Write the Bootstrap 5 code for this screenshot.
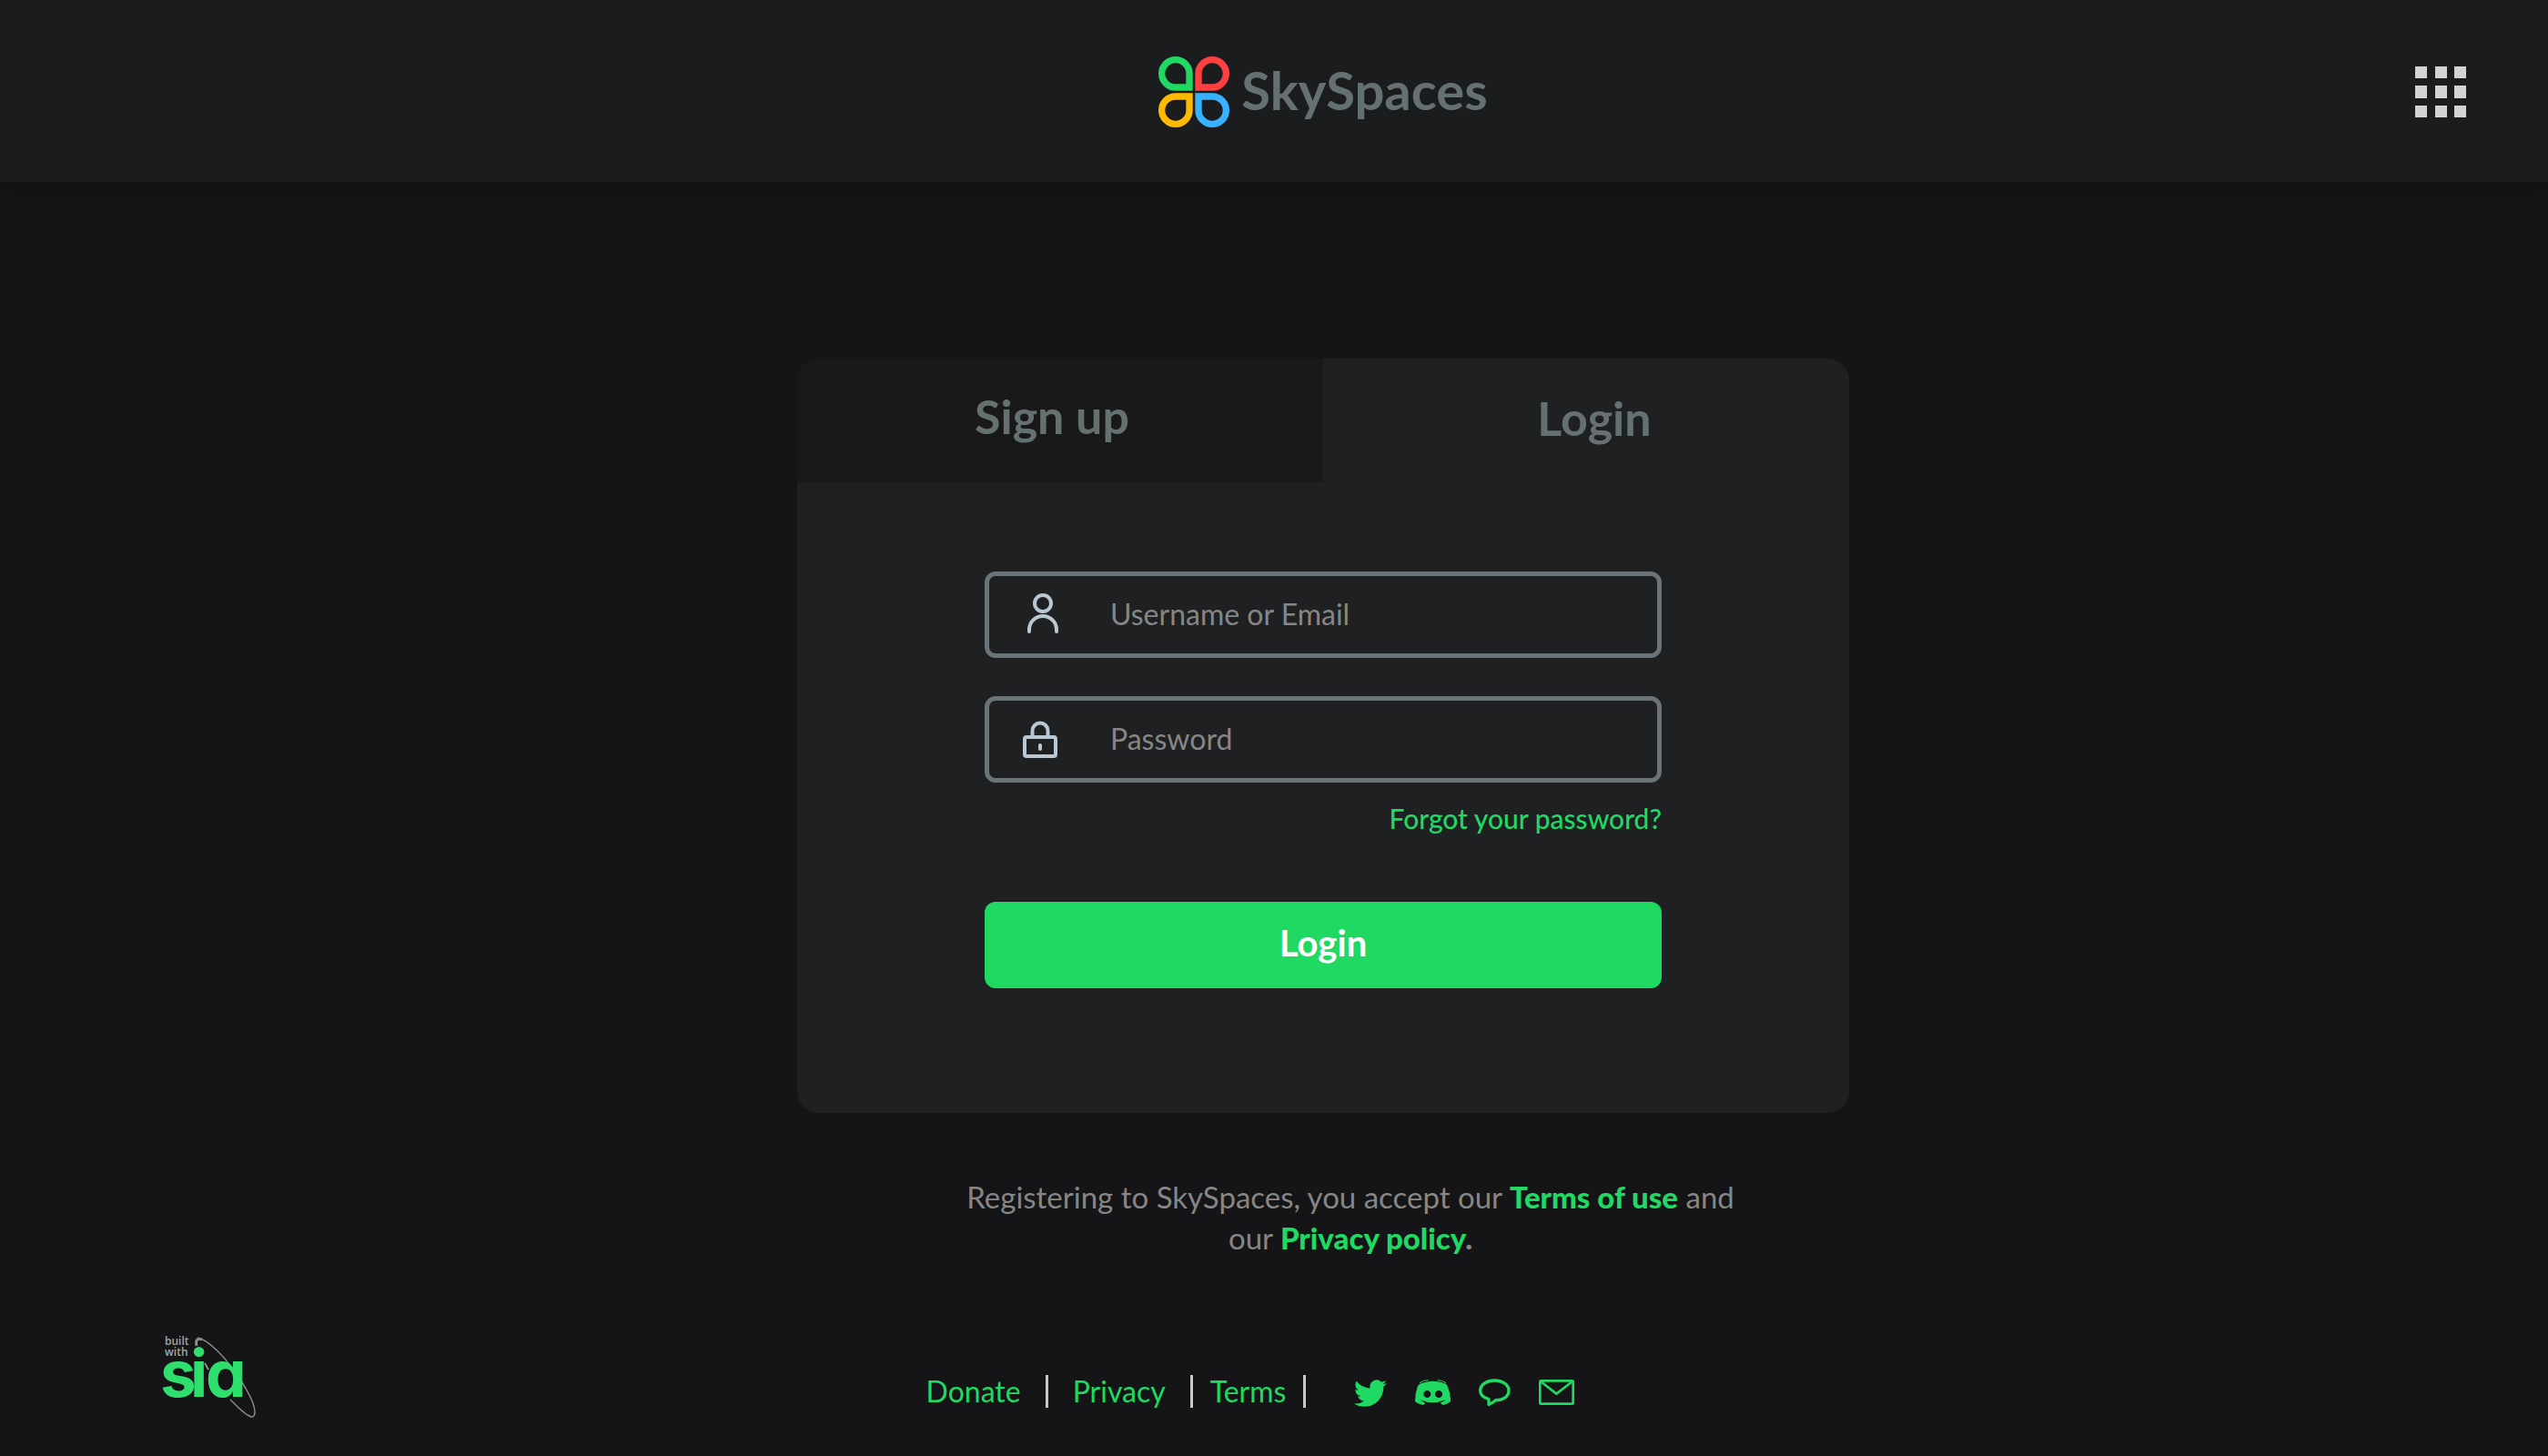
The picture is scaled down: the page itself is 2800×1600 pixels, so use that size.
<!DOCTYPE html>
<html lang="en">
<head>
<meta charset="utf-8">
<meta name="viewport" content="width=device-width, initial-scale=1">
<title>SkySpaces</title>
<link href="https://cdn.jsdelivr.net/npm/bootstrap@5.3.0/dist/css/bootstrap.min.css" rel="stylesheet">
<style>
  :root { --brand: #20d962; --slate: #657171; --muted: #868686; }
  body { background: #151517; color: var(--muted); font-family: Lato, "Open Sans", sans-serif; font-size: 32px; line-height: 45px; }
  a { color: var(--brand); text-decoration: none; }
  a:hover { color: #5be58c; }
  svg { display: block; flex: none; overflow: visible; }

  .top-bar { background: #1b1c1e; min-height: 200px; padding: 2px 90px 0 198px; box-shadow: 0 4px 30px rgba(15, 15, 15, .6); display: grid; grid-template-columns: 1fr auto 1fr; align-items: center; }
  .brand-link { color: var(--slate); font-size: 58px; line-height: 72px; font-weight: 700; gap: 13px; grid-column: 2; }
  .brand-link span { padding-bottom: 4px; }
  .brand-link:hover { color: var(--slate); }

  main { padding: 194px 0 0 108px; }
  .auth-card { width: 100%; max-width: 1156px; background: #1f2022; border-radius: 24px; box-shadow: 0 0 24px rgba(24, 24, 24, .7); overflow: hidden; }
  .auth-tab { background: transparent; border: 0; height: 136px; padding: 0 0 6px 0; color: var(--slate); font-size: 52px; line-height: 60px; font-weight: 700; }
  .auth-tab.idle { background: #191919; padding-right: 18px; padding-bottom: 10px; }
  .auth-tab.current { padding-left: 18px; }
  .auth-form { max-width: 744px; padding: 98px 0 137px; }
  .field { height: 95px; border: 5px solid #6a7378; border-radius: 12px; padding: 0 0 2px 37px; gap: 56px; }
  .field-next { margin-top: 42px; }
  .field input { background: transparent; border: 0; outline: 0; color: #d5d5d5; padding: 0; min-width: 0; line-height: 44px; }
  .field input::placeholder { color: var(--muted); opacity: 1; }
  .forgot { font-size: 30px; line-height: 40px; margin-top: 19px; margin-bottom: 72px; font-weight: 500; }
  .btn-brand { --bs-btn-bg: var(--brand); --bs-btn-color: #fff; --bs-btn-hover-bg: #1cc458; --bs-btn-hover-color: #fff; --bs-btn-border-width: 0; --bs-btn-font-size: 40px; --bs-btn-font-weight: 700; --bs-btn-border-radius: 12px; height: 95px; line-height: 48px; padding: 0 0 6px; }

  .legal { max-width: 900px; margin: 70px 0 0 60px; font-size: 33px; }
  .legal a, .legal b { font-weight: 900; }

  footer { display: grid; grid-template-columns: 1fr auto 1fr; align-items: center; padding: 80px 226px 0 174px; }
  .foot-nav { gap: 27px; padding-top: 27px; }
  .foot-bar { width: 3px; height: 36px; background: #c9c9c9; }
  .foot-tight { gap: 19px; }
  .foot-icons { gap: 31px; padding-left: 26px; padding-top: 3px; }
</style>
</head>
<body>
<header class="top-bar">
  <a class="brand-link d-flex align-items-center" href="#">
    <svg width="78" height="78" viewBox="0 0 234 234" fill="none" stroke-width="22" aria-hidden="true">
      <path stroke="#20d962" d="M102 102H56.500A45.500 45.500 0 1 1 102 56.500Z"/>
      <path stroke="#ff4040" d="M132 102V56.500A45.500 45.500 0 1 1 177.500 102Z"/>
      <path stroke="#ffb900" d="M102 132V177.500A45.500 45.500 0 1 1 56.500 132Z"/>
      <path stroke="#38b2ff" d="M132 132H177.500A45.500 45.500 0 1 1 132 177.500Z"/>
    </svg>
    <span>SkySpaces</span>
  </a>
  <button class="btn p-0 border-0 ms-auto" type="button" aria-label="Apps">
    <svg width="56" height="56" viewBox="0 0 56 56" fill="#d3d3d3">
      <path d="M0 0h13v13H0zM22 0h13v13H22zM43 0h13v13H43zM0 21h13v14H0zM22 21h13v14H22zM43 21h13v14H43zM0 43h13v13H0zM22 43h13v13H22zM43 43h13v13H43z"/>
    </svg>
  </button>
</header>

<main class="d-flex flex-column align-items-center">
  <section class="auth-card">
    <div class="d-flex" role="tablist">
      <button class="auth-tab idle w-50" type="button" role="tab" aria-selected="false">Sign up</button>
      <button class="auth-tab current w-50" type="button" role="tab" aria-selected="true">Login</button>
    </div>
    <form class="auth-form mx-auto d-flex flex-column">
      <label class="field d-flex align-items-center" for="user">
        <svg width="40" height="46" viewBox="0 0 40 46" fill="none" stroke="#b9c7d3" stroke-width="4" stroke-linecap="round" aria-hidden="true">
          <circle cx="22" cy="11" r="9"/><path d="M7 42V40a15 15 0 0 1 30 0V42"/>
        </svg>
        <input class="flex-grow-1" id="user" type="text" placeholder="Username or Email">
      </label>
      <label class="field field-next d-flex align-items-center" for="pass">
        <svg width="40" height="46" viewBox="0 0 40 46" fill="none" stroke="#b9c7d3" stroke-width="4" stroke-linecap="round" aria-hidden="true">
          <rect x="2" y="21" width="34" height="21" rx="2"/><path d="M10.500 20V14a8.500 8.500 0 0 1 17 0V20M19 30v4"/>
        </svg>
        <input class="flex-grow-1" id="pass" type="password" placeholder="Password">
      </label>
      <a class="forgot align-self-end" href="#">Forgot your password?</a>
      <button class="btn btn-brand w-100" type="submit">Login</button>
    </form>
  </section>
  <p class="legal text-center">Registering to SkySpaces, you accept our <a href="#">Terms of use</a> and<br>our <a href="#">Privacy policy</a><b>.</b></p>
</main>

<footer>
  <a href="#" aria-label="Built with Sia">
    <svg width="110" height="104" viewBox="-4 -6 110 104">
      <g fill="none" stroke="#8f8f8f">
        <path stroke-width="1.500" d="M39 1C50 3 68 20 84 44C96 62 105 80 101 87C98 92 84 78 75 69"/>
        <path stroke-width="3" d="M38 10C37 4 38 1 44 3"/>
        <path stroke-width="2" d="M47 29L51 36"/>
      </g>
      <text x="3" y="9" font-family="Open Sans" font-weight="600" font-size="12" fill="#a5a5a5">built</text>
      <text x="3" y="21" font-family="Open Sans" font-weight="600" font-size="12" fill="#a5a5a5">with</text>
      <text y="66" font-family="Inter" font-weight="700" font-size="71" fill="#2fdf6d" style="font-feature-settings:'cv11'"><tspan x="-2">s</tspan><tspan x="31">i</tspan><tspan x="48">a</tspan></text>
    </svg>
  </a>
  <nav class="foot-nav d-flex align-items-center">
    <a href="#">Donate</a><span class="foot-bar"></span><a href="#">Privacy</a>
    <div class="foot-tight d-flex align-items-center"><span class="foot-bar"></span><a href="#">Terms</a><span class="foot-bar"></span></div>
    <div class="foot-icons d-flex align-items-center">
      <a href="#" aria-label="Twitter"><svg width="36" height="36" viewBox="0 0 16 16" fill="currentColor"><path d="M5.026 15c6.038 0 9.341-5.003 9.341-9.334 0-.14 0-.282-.006-.422A6.685 6.685 0 0 0 16 3.542a6.658 6.658 0 0 1-1.889.518 3.301 3.301 0 0 0 1.447-1.817 6.533 6.533 0 0 1-2.087.793A3.286 3.286 0 0 0 7.875 6.030a9.325 9.325 0 0 1-6.767-3.429 3.289 3.289 0 0 0 1.018 4.382A3.323 3.323 0 0 1 .64 6.575v.045a3.288 3.288 0 0 0 2.632 3.218 3.203 3.203 0 0 1-.865.115 3.230 3.230 0 0 1-.614-.057 3.283 3.283 0 0 0 3.067 2.277A6.588 6.588 0 0 1 .78 13.580a6.320 6.320 0 0 1-.78-.045A9.344 9.344 0 0 0 5.026 15z"/></svg></a>
      <a href="#" aria-label="Discord"><svg width="39" height="28" viewBox="288 78 117 84" fill="currentColor"><path fill-rule="evenodd" d="M308 91Q325 83 346 83Q370 83 386 91Q392 92 396 102Q406 125 405 149Q398 158 380 162L371 155Q380 153 388 145Q367 154 346 154Q325 154 306 145Q314 153 322 155L315 162Q296 158 288 149Q288 122 297 100Q301 92 308 91ZM328 114a12 12 0 1 0 .1 0ZM366 114a12 12 0 1 0 .1 0Z"/><path fill="none" stroke="currentColor" stroke-width="3" d="M303 89Q316 80 331 80M390 89Q377 80 362 80"/></svg></a>
      <a href="#" aria-label="Chat"><svg width="35" height="30" viewBox="498 80 105 90" fill="none" stroke="currentColor" stroke-width="10" stroke-linejoin="round"><path d="M550 86C573 86 597 98 597 119C597 141 575 151 554 151Q546 159 531 165V148C515 143 503 133 503 119C503 98 527 86 550 86Z"/></svg></a>
      <a href="#" aria-label="Mail"><svg width="39" height="28" viewBox="0 0 117 84" fill="none" stroke="currentColor" stroke-width="8" stroke-linejoin="round"><rect x="4" y="4" width="109" height="76" rx="3"/><path d="M6 6L58 47L111 6"/></svg></a>
    </div>
  </nav>
</footer>
<script src="https://cdn.jsdelivr.net/npm/bootstrap@5.3.0/dist/js/bootstrap.bundle.min.js"></script>
</body>
</html>
